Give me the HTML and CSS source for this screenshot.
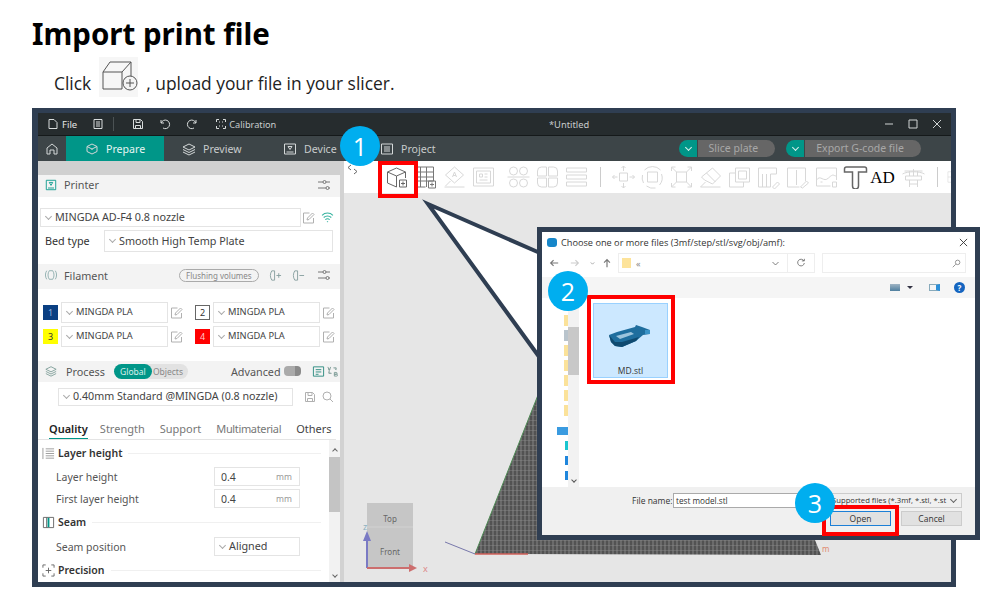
FILE: index.html
```html
<!DOCTYPE html>
<html lang="en">
<head>
  <meta charset="UTF-8" />
  <title>Import print file</title>
  <link rel="stylesheet" href="styles.css">
</head>
<body>
<div class="page">
  <h1>Import print file</h1>
  <p class="intro">
    <span>Click</span>
    <span class="intro-icon">
      <svg width="39" height="40" viewBox="0 0 39 40" fill="none" stroke="#555" stroke-width="1.2"><path d="M4 15h19v17H4zM4 15l7-10h21l-9 10M32 5v17"/><circle cx="31" cy="26" r="7" fill="#f4f4f4"/><path d="M27 26h8M31 22v8"/></svg>
    </span>
    <span>, upload your file in your slicer.</span>
  </p>

  <div class="app">
    <div class="titlebar">
      <svg class="tb-icon first" viewBox="0 0 12 12"><path d="M2 1.5h5l3 3v6H2z"/></svg>
      <span class="tb-text">File</span>
      <svg class="tb-icon menu" viewBox="0 0 12 12"><path d="M2 1.5h8v9H2zM4 4h4M4 6h4M4 8h4"/></svg>
      <span class="tb-sep"></span>
      <svg class="tb-icon save" viewBox="0 0 12 12"><path d="M1.5 1.5h7l2 2v7h-9zM4 1.5v3h4v-3M3.5 10.5v-3h5v3"/></svg>
      <svg class="tb-icon undo" viewBox="0 0 12 12"><path d="M2 2v3h3M2.2 5A4.3 4.3 0 1 1 4 10"/></svg>
      <svg class="tb-icon undo" viewBox="0 0 12 12"><path d="M10 2v3H7M9.8 5A4.3 4.3 0 1 0 8 10"/></svg>
      <svg class="tb-icon calib" viewBox="0 0 12 12"><path d="M1.5 4V1.5H4M8 1.5h2.500V4M10.500 8v2.500H8M4 10.500H1.500V8M4 4h1M7 4h1M4 8h1M7 8h1"/></svg>
      <span class="tb-text calib-text">Calibration</span>
      <span class="doc-title">*Untitled</span>
      <div class="win-controls">
        <svg viewBox="0 0 12 12"><path d="M2 6h8"/></svg>
        <svg viewBox="0 0 12 12"><path d="M2 2h8v8H2z"/></svg>
        <svg viewBox="0 0 12 12"><path d="M2 2l8 8M10 2l-8 8"/></svg>
      </div>
    </div>

    <div class="tabbar">
      <div class="tab home">
        <svg class="tab-icon" viewBox="0 0 14 14"><path d="M2 12V6l5-4 5 4v6H9V8H5v4z"/></svg>
      </div>
      <div class="tab active">
        <svg class="tab-icon" viewBox="0 0 14 14"><path d="M7 2l5 2.500v5L7 12 2 9.500v-5zM2 4.500L7 7l5-2.500M7 7v1"/></svg>
        <span>Prepare</span>
      </div>
      <div class="tab preview">
        <svg class="tab-icon" viewBox="0 0 14 14"><path d="M7 2l6 3-6 3-6-3zM1 7.500l6 3 6-3M1 10l6 3 6-3"/></svg>
        <span>Preview</span>
      </div>
      <div class="tab device">
        <svg class="tab-icon" viewBox="0 0 14 14"><path d="M1.500 2h11v10h-11zM3.500 10h7M5 4.500h4L7 7.500z"/></svg>
        <span>Device</span>
      </div>
      <div class="tab project">
        <svg class="tab-icon" viewBox="0 0 14 14"><path d="M1.500 2h11v10h-11zM4 5h6M4 7h6M4 9h6"/></svg>
        <span>Project</span>
      </div>
      <div class="action first-action"><i></i><span>Slice plate</span></div>
      <div class="action export-action"><i></i><span>Export G-code file</span></div>
    </div>

    <div class="workspace">
      <aside class="sidebar">
        <div class="strip"></div>

        <div class="panel-head printer-head">
          <svg class="head-icon" viewBox="0 0 14 14"><path d="M1.500 1.500h11v11h-11zM3.500 10.500h7M5 4h4L7 7.500z" stroke="#009688"/></svg>
          <span>Printer</span>
          <svg class="sliders" viewBox="0 0 14 14"><use href="#sliders"/></svg>
        </div>
        <div class="printer-body">
          <div class="row-printer">
            <div class="combo printer-combo">MINGDA AD-F4 0.8 nozzle</div>
            <svg class="edit" viewBox="0 0 12 12"><use href="#edit"/></svg>
            <svg class="wifi" viewBox="0 0 12 12"><path d="M1 4a7 7 0 0 1 10 0M2.500 6a5 5 0 0 1 7 0M4 8a3 3 0 0 1 4 0M5.500 10a1 1 0 0 1 1 0"/></svg>
          </div>
          <div class="row-bed">
            <span class="bed-label">Bed type</span>
            <div class="combo bed-combo">Smooth High Temp Plate</div>
          </div>
        </div>

        <div class="panel-head filament-head">
          <svg class="head-icon" viewBox="0 0 14 14"><path d="M2 2c-2 3-2 7 0 10M5 2c-2 3-2 7 0 10M9 2c2 3 2 7 0 10M12 2c2 3 2 7 0 10M5 2h4M5 12h4" stroke="#8aa"/></svg>
          <span>Filament</span>
          <span class="flush">Flushing volumes</span>
          <svg class="fil-btn" viewBox="0 0 14 14"><path d="M3 2c-2 3-2 7 0 10M6 2v10M3 2h3M3 12h3M8 7h5M10.500 4.500v5"/></svg>
          <svg class="fil-btn" viewBox="0 0 14 14"><path d="M3 2c-2 3-2 7 0 10M6 2v10M3 2h3M3 12h3M8 7h5"/></svg>
          <svg class="sliders" viewBox="0 0 14 14"><use href="#sliders"/></svg>
        </div>
        <div class="filament-grid">
          <div class="fil-item"><b class="swatch s-blue">1</b><div class="combo">MINGDA PLA</div><svg class="edit" viewBox="0 0 12 12"><use href="#edit"/></svg></div>
          <div class="fil-item"><b class="swatch s-white">2</b><div class="combo">MINGDA PLA</div><svg class="edit" viewBox="0 0 12 12"><use href="#edit"/></svg></div>
          <div class="fil-item"><b class="swatch s-yellow">3</b><div class="combo">MINGDA PLA</div><svg class="edit" viewBox="0 0 12 12"><use href="#edit"/></svg></div>
          <div class="fil-item"><b class="swatch s-red">4</b><div class="combo">MINGDA PLA</div><svg class="edit" viewBox="0 0 12 12"><use href="#edit"/></svg></div>
        </div>

        <div class="panel-head process-head">
          <svg class="head-icon" viewBox="0 0 14 14"><path d="M7 2l6 3-6 3-6-3zM1 7.500l6 3 6-3M1 10l6 3 6-3" stroke="#7a9a95"/></svg>
          <span class="proc-title">Process</span>
          <div class="scope"><span class="scope-on">Global</span><span class="scope-off">Objects</span></div>
          <span class="advanced">Advanced</span>
          <span class="switch"></span>
          <svg class="fil-btn list" viewBox="0 0 14 14"><path d="M1.500 2h11v10h-11zM4 5h6M4 7.500h6M4 10h3" stroke="#2a8a80"/></svg>
          <svg class="ab-icon" viewBox="0 0 12 12"><path d="M1 1l1.500 4L4 1M1.500 3.500h2M7 2h3v2M10 4L8.500 3M5 8H2V6M2 6l1.500 1M8 7h2a1 1 0 0 1 0 2H8zM8 9h2.500a1 1 0 0 1 0 2H8z" stroke="#7b9a95"/></svg>
        </div>
        <div class="process-combo-row">
          <div class="combo process-combo">0.40mm Standard @MINGDA (0.8 nozzle)</div>
          <svg class="edit pc-icon" viewBox="0 0 12 12"><path d="M1.500 1.500h7l2 2v7h-9zM4 1.500v3h4v-3M3.500 10.500v-3h5v3"/></svg>
          <svg class="edit pc-icon" viewBox="0 0 12 12"><path d="M8 8l3 3"/><circle cx="5" cy="5" r="4"/></svg>
        </div>

        <div class="tabs">
          <span class="sub-tab on">Quality</span>
          <span class="sub-tab">Strength</span>
          <span class="sub-tab">Support</span>
          <span class="sub-tab multi">Multimaterial</span>
          <span class="sub-tab others">Others</span>
        </div>

        <div class="settings">
          <div class="settings-list">
            <div class="group-title">
              <svg class="group-icon" viewBox="0 0 14 14"><path d="M1 1v12M4 2h9M4 4.500h9M4 7h9M4 9.500h9M4 12h9" stroke="#999"/></svg>
              <strong>Layer height</strong>
            </div>
            <div class="field first-field"><label>Layer height</label><div class="input"><span>0.4</span><em>mm</em></div></div>
            <div class="field"><label>First layer height</label><div class="input"><span>0.4</span><em>mm</em></div></div>
            <div class="group-title seam">
              <svg class="group-icon" viewBox="0 0 14 14"><path d="M1.500 1.500h11v11h-11zM5 1.500v11" stroke="#666"/><path d="M7 2v10" stroke="#009688" stroke-width="2"/></svg>
              <strong>Seam</strong>
            </div>
            <div class="field"><label>Seam position</label><div class="combo aligned">Aligned</div></div>
            <div class="group-title precision">
              <svg class="group-icon" viewBox="0 0 14 14"><path d="M1 4V1h3M10 1h3v3M13 10v3h-3M4 13H1v-3M7 4v6M4 7h6" stroke="#666"/></svg>
              <strong>Precision</strong>
            </div>
          </div>
          <div class="scroll">
            <span class="arrow up"></span>
            <span class="thumb"></span>
            <span class="arrow down"></span>
          </div>
        </div>
      </aside>

      <div class="divider"></div>

      <main class="viewport">
        <div class="toolbar">
          <div class="collapse">
            <svg viewBox="0 0 19 19"><path d="M7 4L4 6.500 7 9M10 8l3 2.500-3 2.500"/></svg>
          </div>
          <div class="tool-group g1">
            <svg class="tool strong" viewBox="0 0 24 24"><path d="M3 7l9-4 9 4v6M3 7l9 4 9-4M12 11v11L3 18V7"/><path d="M15 15h7v7h-7zM18.500 16.500v4M16.500 18.500h4"/></svg>
            <svg class="tool strong" viewBox="0 0 24 24"><path d="M2 2h18v14H2zM2 7h18M2 12h18M7 2v20M13 2v20M2 2v20h10M15 16h7v7h-7zM18.500 17.500v4M16.500 19.500h4"/></svg>
            <svg class="tool" viewBox="0 0 24 24"><path d="M12 2l9 8-9 8-9-8zM2 22h20M3 21l5-5M10 12l2-5 2 5M10.500 10.500h3"/></svg>
            <svg class="tool" viewBox="0 0 24 24"><path d="M2 3h20v18H2zM5 6h14v12H5zM8 9h3v3H8zM13 9h3M13 12h3M8 15h8"/></svg>
          </div>
          <div class="tool-group g2">
            <svg class="tool" viewBox="0 0 24 24"><circle cx="7" cy="6" r="4"/><circle cx="17" cy="6" r="4"/><circle cx="7" cy="18" r="4"/><circle cx="17" cy="18" r="4"/><path d="M1 12h22"/></svg>
            <svg class="tool" viewBox="0 0 24 24"><path d="M11 2H6a4 4 0 0 0-4 4v5h9zM13 2h5a4 4 0 0 1 4 4v5h-9zM11 22H6a4 4 0 0 1-4-4v-5h9zM13 22h5a4 4 0 0 0 4-4v-5h-9z"/></svg>
            <svg class="tool" viewBox="0 0 24 24"><path d="M2 3h20v4H2zM2 10h20v4H2zM2 17h20v4H2z"/></svg>
          </div>
          <span class="tool-sep"></span>
          <div class="tool-group g3">
            <svg class="tool" viewBox="0 0 24 24"><path d="M8 8h8v8H8zM12 1v5M10 3l2-2 2 2M12 23v-5M10 21l2 2 2-2M1 12h5M3 10l-2 2 2 2M23 12h-5M21 10l2 2-2 2"/></svg>
            <svg class="tool" viewBox="0 0 24 24"><path d="M7 7h10v10H7zM4 5a11 11 0 0 1 16 0M21 9a11 11 0 0 1-2 11M15 23a11 11 0 0 1-9-2M3 18a11 11 0 0 1-1-8"/></svg>
            <svg class="tool" viewBox="0 0 24 24"><path d="M7 7h10v10H7zM2 2l5 5M22 2l-5 5M2 22l5-5M22 22l-5-5M2 6V2h4M18 2h4v4M22 18v4h-4M6 22H2v-4"/></svg>
            <svg class="tool" viewBox="0 0 24 24"><path d="M14 3l8 8-8 8-8-4-3-3zM8 8l9 9M2 22h20M2 22l5-5"/></svg>
            <svg class="tool" viewBox="0 0 24 24"><path d="M8 3h14v14H8zM2 8h6M2 8v14h14v-5M11 6h8v8h-8z"/></svg>
            <svg class="tool" viewBox="0 0 24 24"><path d="M2 3h18v6h-6v13H2zM6 9v13M10 9v13M16 22l5-5 2 2-5 5z"/></svg>
            <svg class="tool" viewBox="0 0 24 24"><path d="M2 3h18v13M2 3v19h12M11 5v15M15 22l6-6 2 2-6 5z"/></svg>
            <svg class="tool" viewBox="0 0 24 24"><path d="M2 3h20v12M2 3v18h14M2 15c4-6 7 3 12-2s5-2 8-2M6 17h2M18 17h4v5h-4z"/></svg>
            <svg class="tool dark-t" viewBox="0 0 24 24"><path d="M3 2h18a2 2 0 0 1 2 2v3h-8v14a2 2 0 0 1-6 0V7H1V4a2 2 0 0 1 2-2z"/></svg>
            <span class="tool ad">AD</span>
            <svg class="tool" viewBox="0 0 24 24"><path d="M1 9c5-3 17-3 22 0M3 6h18M4 11h16v4H4zM8 6v5M12 4v7M16 6v5M8 15v7M16 15v7M8 19h8"/></svg>
          </div>
          <span class="tool-sep last"></span>
          <svg class="tool cut" viewBox="0 0 24 24"><path d="M5 3h14v18H5zM5 12h14"/></svg>
        </div>

        <!-- plate and view cube sit on the free 3d canvas, coords = page coords -->
        <svg class="scene" viewBox="344 193 607 389">
          <defs>
            <pattern id="plateGrid" width="8" height="5" patternUnits="userSpaceOnUse">
              <rect width="8" height="5" fill="#525252"/>
              <path d="M0 0h8M1 0v5M5 0v5" stroke="#8f8f8f" stroke-width=".8" fill="none"/>
            </pattern>
          </defs>
          <path class="plate" d="M475 554L538 395H700L815 540L821 555z"/>
          <path d="M475 554L538 395" stroke="#4f8a55" fill="none"/>
          <path d="M475 554H528" stroke="#d0605a" stroke-width="1.500"/>
          <path d="M445 542L475 554" stroke="#5a5a9a" stroke-width=".8"/>
          <text class="size-mark" x="822" y="552">m</text>
          <rect x="367" y="503" width="46" height="65" fill="#c6c6c6"/>
          <path d="M367 527h46" stroke="#d2d2d2"/>
          <text class="cube-text" x="390" y="522">Top</text>
          <text class="cube-text" x="390" y="555">Front</text>
          <path d="M367 568V540" stroke="#7a7ac4" stroke-width="2"/>
          <path d="M363 541l4-10 4 10z" fill="#7a7ac4"/>
          <text class="axis z" x="363" y="530">z</text>
          <path d="M367 568H410" stroke="#cc6e6e" stroke-width="2"/>
          <path d="M409 564l8 4-8 4z" fill="#cc6e6e"/>
          <text class="axis x" x="423" y="572">x</text>
        </svg>
      </main>
    </div>
  </div>

  <svg class="callout" viewBox="0 0 1000 600">
    <path d="M428 204L540 253V358z"/>
  </svg>

  <section class="dialog">
    <div class="dlg-title">
      <span class="dlg-logo"></span>
      <span>Choose one or more files (3mf/step/stl/svg/obj/amf):</span>
      <svg class="dlg-close" viewBox="0 0 10 10"><path d="M1 1l8 8M9 1l-8 8"/></svg>
    </div>
    <div class="dlg-nav">
      <svg class="nav-btn" viewBox="0 0 12 12"><path d="M11 6H2M5.500 2.500L2 6l3.500 3.500"/></svg>
      <svg class="nav-btn faint" viewBox="0 0 12 12"><path d="M1 6h9M6.500 2.500L10 6l-3.500 3.500"/></svg>
      <svg class="nav-btn tiny" viewBox="0 0 12 12"><path d="M3 5l3 3 3-3"/></svg>
      <svg class="nav-btn up" viewBox="0 0 12 12"><path d="M6 11V2M2.500 5.500L6 2l3.500 3.500"/></svg>
      <div class="address">
        <span class="folder"></span><span class="crumb">«</span>
        <svg class="addr-chev" viewBox="0 0 12 12"><path d="M2 4l4 4 4-4"/></svg>
        <span class="refresh"><svg viewBox="0 0 12 12"><path d="M9.500 3.500A4 4 0 1 0 10 6M7 3.500h3V1"/></svg></span>
      </div>
      <div class="search"><svg viewBox="0 0 12 12"><path d="M5 7l-4 4"/><circle cx="7.500" cy="4.500" r="3"/></svg></div>
    </div>
    <div class="dlg-tools">
      <span class="view-icon"></span><span class="view-caret"></span>
      <span class="pane-icon"></span><span class="help">?</span>
    </div>
    <div class="dlg-body">
      <div class="tree">
        <span class="folder-sliver"></span>
        <span class="folder-sliver grey"></span>
        <span class="folder-sliver"></span>
        <span class="folder-sliver"></span>
        <span class="folder-sliver"></span>
        <span class="folder-sliver"></span>
        <span class="folder-sliver"></span>
        <span class="pc-node"></span>
        <span class="drive teal"></span>
        <span class="drive"></span>
        <span class="drive"></span>
      </div>
      <div class="tree-scroll"><span class="tree-thumb"></span><span class="tree-down"></span></div>
      <div class="files">
        <div class="file-tile">
          <svg class="model" viewBox="0 0 44 26">
            <path d="M0 10L8 7 26 2 27 0 33 2 41 5V9L34 10 27 16 13 22 6 21 2 17z" fill="#1f6e9e"/>
            <path d="M7 11L22 7 25 9 11 14z" fill="#9cc4dc"/>
            <path d="M0 10L2 17 6 21 13 22 27 16 30 12 13 17 6 17z" fill="#0f4a70"/>
            <path d="M36 5h5v4h-5z" fill="#3a93c7"/>
          </svg>
          <span>MD.stl</span>
        </div>
      </div>
    </div>
    <div class="dlg-foot">
      <div class="foot-row">
        <label>File name:</label>
        <div class="name-input">test model.stl</div>
        <div class="filter">Supported files (*.3mf, *.stl, *.st</div>
      </div>
      <div class="foot-row buttons">
        <button class="btn primary">Open</button>
        <button class="btn">Cancel</button>
      </div>
    </div>
  </section>

  <span class="red-box box-1"></span>
  <span class="red-box box-2"></span>
  <span class="red-box box-3"></span>
  <span class="badge badge-1">1</span>
  <span class="badge badge-2">2</span>
  <span class="badge badge-3">3</span>
</div>

<svg class="defs" width="0" height="0">
  <symbol id="sliders" viewBox="0 0 14 14"><path d="M1 4h5M9 4h4M1 10h8M12 10h1" fill="none"/><circle cx="7.500" cy="4" r="1.500" fill="none"/><circle cx="10.500" cy="10" r="1.500" fill="none"/></symbol>
  <symbol id="edit" viewBox="0 0 12 12"><path d="M10.500 6v5h-10V1h6M4 8l.5-2L9.500 1 11 2.500 6 7.500z" fill="none"/></symbol>
</svg>
</body>
</html>
```

FILE: styles.css
```css
* {
  box-sizing: border-box;
}

body {
  margin: 0;
  background: #fff;
  font-family: "Noto Sans", "Open Sans", sans-serif;
  color: #333;
}

svg {
  fill: none;
  stroke-width: 1;
}

.defs {
  position: absolute;
}

.page {
  position: relative;
  width: 1000px;
  height: 600px;
  padding: 13px 0 0 32px;
  overflow: hidden;
}

h1 {
  margin: 0;
  height: 42px;
  font-size: 29.5px;
  line-height: 42px;
  font-weight: 700;
  color: #000;
}

.intro {
  display: flex;
  align-items: center;
  gap: 8px;
  margin: 0 0 0 22px;
  height: 53px;
  padding-top: 2px;
  font-family: "Open Sans", sans-serif;
  font-size: 17.4px;
  color: #222;
}

.intro-icon {
  display: flex;
  width: 39px;
  height: 40px;
  margin-top: -12px;
  background: #f6f6f6;
}

/* app window */
.app {
  display: flex;
  flex-direction: column;
  width: 924px;
  height: 479px;
  border: solid #2f3e52;
  border-width: 5px 5px 5px 6px;
  background: #e6e6e6;
}

.titlebar {
  position: relative;
  display: flex;
  align-items: center;
  flex: none;
  height: 23px;
  background: #262c2e;
  border-bottom: 1px solid #15191a;
  color: #e4e6e6;
  font-size: 9.5px;
}

.tb-icon {
  width: 12px;
  height: 12px;
  stroke: #d8dcdc;
}

.tb-icon.first { margin-left: 9px; }
.tb-text { margin-left: 3px; }
.tb-icon.menu { margin-left: 15px; }
.tb-sep { width: 1px; height: 14px; margin-left: 9px; background: #4b5254; }
.tb-icon.save { margin-left: 18px; }
.tb-icon.undo { margin-left: 15px; }
.tb-icon.calib { margin-left: 17px; }
.calib-text { margin-left: 2px; font-size: 9.200px; color: #c9cdcd; }

.doc-title {
  position: absolute;
  left: 511px;
  font-size: 9.300px;
  color: #c9cdcd;
}

.win-controls {
  display: flex;
  gap: 12px;
  margin-left: auto;
  margin-right: 8px;
}

.win-controls svg {
  width: 12px;
  height: 12px;
  stroke: #d0d4d4;
}

.tabbar {
  display: flex;
  align-items: center;
  flex: none;
  height: 25px;
  background: #3d4548;
  color: #c8cccc;
  font-size: 10.600px;
}

.tab {
  display: flex;
  align-items: center;
  gap: 7px;
  height: 100%;
}

.tab-icon {
  width: 14px;
  height: 14px;
  stroke: #d4d8d8;
}

.tab.home { width: 28px; justify-content: center; }
.tab.active { width: 98px; padding-left: 19px; background: #009688; color: #e6f5f3; }
.tab.preview { margin-left: 18px; width: 101px; }
.tab.device { width: 97px; }
.tab.project { margin-left: 0; }

.action {
  display: flex;
  height: 17px;
  color: #a8a8a8;
  font-size: 10.5px;
  line-height: 17px;
}

.action i {
  width: 18px;
  border-radius: 9px 0 0 9px;
  background: #009688;
  position: relative;
}

.action i::after {
  content: "";
  position: absolute;
  left: 7px;
  top: 5px;
  width: 4px;
  height: 4px;
  border: solid #d8f0ec;
  border-width: 0 1px 1px 0;
  transform: rotate(45deg);
}

.action span {
  padding: 0 17px 0 11px;
  margin-left: 1px;
  border-radius: 0 9px 9px 0;
  background: #666;
  white-space: nowrap;
}

.first-action { margin-left: 243px; }
.export-action { margin-left: 11px; }

.workspace {
  display: flex;
  flex: 1;
  min-height: 0;
}

/* left panel */
.sidebar {
  display: flex;
  flex-direction: column;
  flex: none;
  width: 302px;
  background: #fff;
  font-size: 10.800px;
}

.divider {
  flex: none;
  width: 4px;
  background: #d2d2d2;
}

.strip {
  height: 14px;
  flex: none;
  background: #d0d0d0;
}

.panel-head {
  display: flex;
  align-items: center;
  flex: none;
  padding-left: 7px;
  padding-bottom: 3px;
  background: #f3f3f3;
  color: #555;
}

.printer-head { height: 22px; }
.filament-head { height: 25px; }
.process-head { height: 21px; padding-bottom: 1px; }

.head-icon {
  width: 12px;
  height: 12px;
  margin-right: 7px;
}

.sliders {
  width: 14px;
  height: 14px;
  margin-left: auto;
  margin-right: 9px;
  stroke: #777;
}

.printer-body {
  flex: none;
  height: 67px;
  padding-top: 11px;
}

.row-printer {
  display: flex;
  align-items: center;
  height: 19px;
  margin-left: 2px;
}

.combo {
  position: relative;
  display: flex;
  align-items: center;
  border: 1px solid #e4e4e4;
  padding: 0 0 2px 14px;
  background: #fff;
  color: #444;
  white-space: nowrap;
}

.combo::before {
  content: "";
  position: absolute;
  left: 5px;
  top: 50%;
  width: 4px;
  height: 4px;
  margin-top: -4px;
  border: solid #aaa;
  border-width: 0 1px 1px 0;
  transform: rotate(45deg);
}

.printer-combo { width: 261px; height: 19px; }

.edit {
  flex: none;
  width: 12px;
  height: 12px;
  stroke: #b0b0b0;
}

.row-printer .edit { margin-left: 2px; }

.wifi {
  width: 13px;
  height: 13px;
  margin-left: 6px;
  stroke: #35b39f;
}

.row-bed {
  display: flex;
  align-items: center;
  margin: 3px 0 0 7px;
}

.bed-label {
  width: 59px;
  padding-bottom: 2px;
}

.bed-combo {
  width: 229px;
  height: 22px;
}

.flush {
  height: 13px;
  margin-left: 71px;
  padding: 0 6px;
  border: 1px solid #aaa;
  border-radius: 7px;
  color: #888;
  font-size: 8px;
  line-height: 11px;
}

.fil-btn {
  width: 13px;
  height: 13px;
  margin-left: 10px;
  stroke: #88a0a0;
}

.filament-grid {
  display: grid;
  grid-template-columns: 140px 140px;
  column-gap: 12px;
  row-gap: 3px;
  flex: none;
  height: 72px;
  padding: 13px 0 0 5px;
  align-content: start;
}

.fil-item {
  display: flex;
  align-items: center;
  gap: 3px;
  height: 21px;
}

.fil-item .combo {
  flex: none;
  width: 107px;
  height: 21px;
  font-size: 9.300px;
}

.swatch {
  flex: none;
  width: 15px;
  height: 15px;
  font-size: 9px;
  font-weight: 400;
  line-height: 15px;
  text-align: center;
}

.s-blue { background: #0a3f82; color: #8fb4e0; }
.s-white { background: #fff; border: 1px solid #666; line-height: 13px; }
.s-yellow { background: #ffff00; }
.s-red { background: #ff0000; color: #ffc8c8; }

.proc-title { margin-left: 2px; }

.scope {
  display: flex;
  align-items: center;
  height: 15px;
  width: 74px;
  margin-left: 9px;
  border-radius: 8px;
  background: #e2e2e2;
  font-size: 8.5px;
}

.scope-on {
  width: 38px;
  height: 15px;
  border-radius: 8px;
  background: #009688;
  color: #d8f0ec;
  line-height: 15px;
  text-align: center;
}

.scope-off {
  margin-left: 1px;
  color: #888;
}

.advanced {
  margin-left: 43px;
}

.switch {
  width: 17px;
  height: 10px;
  margin-left: 3px;
  border-radius: 4px;
  background: #aaa;
  border-right: 6px solid #8a8a8a;
}

.list {
  margin-left: 11px;
}

.ab-icon {
  width: 11px;
  height: 13px;
  margin-left: 2px;
}

.process-combo-row {
  display: flex;
  align-items: center;
  flex: none;
  height: 38px;
  padding: 0 0 9px 20px;
}

.process-combo {
  width: 235px;
  height: 18px;
  font-size: 10.700px;
}

.pc-icon {
  margin-left: 4px;
  margin-right: 2px;
}

.pc-icon:nth-of-type(1) { margin-left: 11px; }

.tabs {
  display: flex;
  flex: none;
  height: 20px;
  margin-right: 4px;
  padding-left: 11px;
  border-bottom: 1px solid #e4e4e4;
  color: #777;
  font-size: 11px;
}

.sub-tab {
  margin-right: 15px;
  height: 19px;
  line-height: 18px;
  white-space: nowrap;
}

.sub-tab.on {
  border-bottom: 1px solid #009688;
  color: #222;
  font-weight: 600;
  margin-right: 12px;
}

.sub-tab.multi {
  letter-spacing: -.35px;
}

.sub-tab.others {
  margin-right: 0;
  color: #444;
}

.settings {
  display: flex;
  flex: 1;
  min-height: 0;
}

.settings-list {
  flex: 1;
  min-width: 0;
  padding-top: 5px;
}

.group-title {
  position: relative;
  display: flex;
  align-items: center;
  height: 16px;
  margin-left: 4px;
  color: #333;
  font-size: 10.500px;
}

.group-title strong {
  position: relative;
  padding-right: 6px;
  background: #fff;
  font-weight: 600;
}

.group-title::after {
  content: "";
  flex: 1;
  height: 1px;
  margin-right: 8px;
  background: #f0f0f0;
}

.group-icon {
  flex: none;
  width: 13px;
  height: 13px;
  margin-right: 3px;
}

.seam { margin-top: 6px; }
.precision { margin-top: 6px; }

.field {
  display: flex;
  align-items: center;
  justify-content: space-between;
  height: 19px;
  margin: 3px 29px 0 18px;
  color: #555;
  font-size: 10.500px;
}

.first-field { margin-top: 6px; }

.field .combo {
  width: 86px;
  height: 19px;
  font-size: 10.800px;
}

.seam + .field { margin-top: 7px; }

.input {
  display: flex;
  align-items: center;
  justify-content: space-between;
  width: 86px;
  height: 19px;
  padding: 0 7px 0 6px;
  border: 1px solid #e4e4e4;
  color: #444;
}

.input em {
  font-size: 8.5px;
  font-style: normal;
  color: #999;
}

.scroll {
  position: relative;
  flex: none;
  width: 11px;
  background: #f2f2f2;
}

.thumb {
  position: absolute;
  left: 0;
  top: 17px;
  width: 100%;
  height: 55px;
  background: #c4c4c4;
}

.arrow {
  position: absolute;
  left: 4px;
  width: 4px;
  height: 4px;
  border: solid #666;
  border-width: 1px 0 0 1px;
}

.arrow.up { top: 9px; transform: rotate(45deg); }
.arrow.down { bottom: 5px; transform: rotate(225deg); }

/* 3d view */
.viewport {
  position: relative;
  flex: 1;
  min-width: 0;
  background: #e6e6e6;
}

.toolbar {
  display: flex;
  align-items: center;
  height: 32px;
  background: #fff;
  overflow: hidden;
}

.collapse {
  align-self: flex-start;
  flex: none;
  width: 19px;
  height: 19px;
  margin-right: 19px;
}

.collapse svg {
  display: block;
  width: 19px;
  height: 19px;
  stroke: #666;
}

.tool-group {
  display: flex;
  flex: none;
}

.tool {
  flex: none;
  width: 29px;
  height: 24px;
  stroke: #d8d8d8;
}

.tool.strong { stroke: #666; }
.tool-group .tool:nth-child(2).strong { stroke: #777; }
.dark-t { stroke: #666; stroke-width: 1.500; }

.ad {
  color: #000;
  font-family: "Liberation Serif", serif;
  font-size: 17px;
  line-height: 25px;
  text-align: center;
  text-indent: -4px;
}

.g2 { margin-left: 6px; }
.g3 { margin-left: 8px; }

.tool-sep {
  flex: none;
  width: 1px;
  height: 20px;
  margin-left: 9px;
  background: #ccc;
}

.tool-sep.last + .cut { width: 14px; margin-left: 7px; }

.scene {
  position: absolute;
  left: 0;
  top: 32px;
  width: 607px;
  height: 389px;
}

.plate {
  fill: url(#plateGrid);
}

.size-mark {
  fill: #e08a70;
  font-size: 8px;
}

.cube-text {
  fill: #666;
  font-size: 8px;
  text-anchor: middle;
}

.axis {
  font-size: 9px;
}

.axis.z { fill: #8ab0c0; }
.axis.x { fill: #d88; }

/* callouts over the screenshot */
.callout {
  position: absolute;
  left: 0;
  top: 0;
  width: 1000px;
  height: 600px;
}

.callout path {
  fill: #fff;
  stroke: #2f3e52;
  stroke-width: 4;
}

.dialog {
  position: absolute;
  left: 537px;
  top: 227px;
  display: flex;
  flex-direction: column;
  width: 443px;
  height: 313px;
  border: 5px solid #2f3e52;
  background: #fff;
  color: #333;
  font-size: 9px;
}

.dlg-title {
  display: flex;
  align-items: center;
  flex: none;
  height: 20px;
  padding-left: 5px;
  font-family: "Open Sans", sans-serif;
  font-size: 9.200px;
}

.dlg-logo {
  width: 10px;
  height: 9px;
  margin-right: 4px;
  border-radius: 3px;
  background: #1686c9;
}

.dlg-close {
  width: 9px;
  height: 9px;
  margin-left: auto;
  margin-right: 7px;
  stroke: #333;
}

.dlg-nav {
  display: flex;
  align-items: center;
  flex: none;
  height: 25px;
  padding: 0 0 3px 7px;
}

.nav-btn {
  flex: none;
  width: 10px;
  height: 10px;
  margin-right: 11px;
  stroke: #777;
  stroke-width: 1.400;
}

.nav-btn.faint { margin-right: 9px; stroke: #ccc; }
.nav-btn.tiny { width: 7px; margin-right: 6px; stroke: #999; }
.nav-btn.up { margin-right: 6px; }

.address {
  display: flex;
  align-items: center;
  flex: none;
  width: 197px;
  height: 20px;
  border: 1px solid #eee;
  padding-left: 3px;
}

.folder {
  width: 9px;
  height: 10px;
  background: #fde39a;
}

.crumb {
  margin-left: 5px;
  color: #888;
}

.addr-chev {
  width: 9px;
  height: 9px;
  margin-left: auto;
  margin-right: 7px;
  stroke: #555;
}

.refresh {
  display: flex;
  align-items: center;
  justify-content: center;
  width: 27px;
  height: 100%;
  border-left: 1px solid #eee;
}

.refresh svg {
  width: 10px;
  height: 10px;
  stroke: #666;
}

.search {
  display: flex;
  align-items: center;
  justify-content: flex-end;
  flex: none;
  width: 144px;
  height: 20px;
  margin-left: 7px;
  padding-right: 4px;
  border: 1px solid #eee;
}

.search svg {
  width: 9px;
  height: 9px;
  stroke: #777;
}

.dlg-tools {
  display: flex;
  align-items: center;
  justify-content: flex-end;
  flex: none;
  height: 21px;
  padding-right: 10px;
  background: #f5f5f5;
}

.view-icon {
  width: 10px;
  height: 7px;
  background: linear-gradient(#9fb4c4, #4f7f9f);
}

.view-caret {
  width: 0;
  height: 0;
  margin-left: 7px;
  border: 3px solid transparent;
  border-top: 3px solid #334;
  border-bottom: 0;
}

.pane-icon {
  width: 11px;
  height: 7px;
  margin-left: 16px;
  border: 1px solid #8ab;
  border-right: 4px solid #2c8fd8;
}

.help {
  width: 11px;
  height: 11px;
  margin-left: 14px;
  border-radius: 50%;
  background: #1565c0;
  color: #fff;
  font-size: 8px;
  font-weight: 700;
  line-height: 11px;
  text-align: center;
}

.dlg-body {
  display: flex;
  flex: 1;
  min-height: 0;
}

.tree {
  display: flex;
  flex-direction: column;
  align-items: flex-end;
  flex: none;
  gap: 4px;
  width: 26px;
  padding-top: 17px;
}

.folder-sliver {
  width: 4px;
  height: 11px;
  background: #fbe29a;
}

.folder-sliver.grey { background: #b9c4cc; }

.pc-node {
  width: 11px;
  height: 8px;
  margin-top: 7px;
  background: #3a9be0;
}

.drive {
  width: 3px;
  height: 9px;
  margin-top: 2px;
  background: #1f86dc;
}

.drive.teal { background: #19c5cf; }

.tree-scroll {
  position: relative;
  flex: none;
  width: 11px;
  background: #f2f2f2;
}

.tree-thumb {
  position: absolute;
  left: 0;
  top: 29px;
  width: 100%;
  height: 48px;
  background: #c8c8c8;
}

.tree-down {
  position: absolute;
  left: 4px;
  bottom: 5px;
  width: 4px;
  height: 4px;
  border: solid #555;
  border-width: 0 1px 1px 0;
  transform: rotate(45deg);
}

.files {
  flex: 1;
  padding: 5px 0 0 14px;
}

.file-tile {
  display: flex;
  flex-direction: column;
  align-items: center;
  width: 75px;
  height: 75px;
  padding-top: 21px;
  border: 1px solid #99d1ff;
  background: #cce8ff;
  font-family: "Open Sans", sans-serif;
  font-size: 8.5px;
}

.model {
  flex: none;
  width: 44px;
  height: 26px;
  margin-bottom: 14px;
  stroke: none;
}

.dlg-foot {
  flex: none;
  height: 48px;
  padding-top: 6px;
  background: #f0f0f0;
  font-family: "Open Sans", sans-serif;
  font-size: 8.5px;
}

.foot-row {
  display: flex;
  align-items: center;
  height: 15px;
  padding-left: 90px;
}

.foot-row label {
  width: 41px;
}

.name-input {
  width: 146px;
  height: 15px;
  padding-left: 2px;
  border: 1px solid #aaa;
  background: #fff;
  font-size: 8.200px;
  line-height: 13px;
}

.filter {
  position: relative;
  width: 143px;
  height: 15px;
  padding-left: 12px;
  border: 1px solid #ccc;
  font-size: 7.700px;
  line-height: 13px;
  white-space: nowrap;
}

.filter::after {
  content: "";
  position: absolute;
  right: 5px;
  top: 3px;
  width: 4px;
  height: 4px;
  border: solid #666;
  border-width: 0 1px 1px 0;
  transform: rotate(45deg);
}

.buttons {
  justify-content: flex-end;
  gap: 10px;
  height: 15px;
  margin-top: 3px;
  padding-right: 13px;
}

.btn {
  width: 61px;
  height: 15px;
  padding: 0;
  border: 1px solid #ccc;
  background: #e1e1e1;
  color: #333;
  font-family: inherit;
  font-size: 8.500px;
}

.btn.primary {
  border-color: #1c7fd6;
}

.red-box {
  position: absolute;
  border: 4px solid #ff0000;
}

.box-1 { left: 378px; top: 161px; width: 40px; height: 37px; }
.box-2 { left: 587px; top: 295px; width: 88px; height: 89px; }
.box-3 { left: 822px; top: 505px; width: 77px; height: 31px; }

.badge {
  position: absolute;
  width: 40px;
  height: 40px;
  border-radius: 50%;
  background: #00aeef;
  color: #fff;
  font-family: "Open Sans", sans-serif;
  font-size: 25px;
  line-height: 40px;
  text-align: center;
}

.badge-1 { left: 340px; top: 126px; }
.badge-2 { left: 548px; top: 271px; }
.badge-3 { left: 795px; top: 483px; }
```
